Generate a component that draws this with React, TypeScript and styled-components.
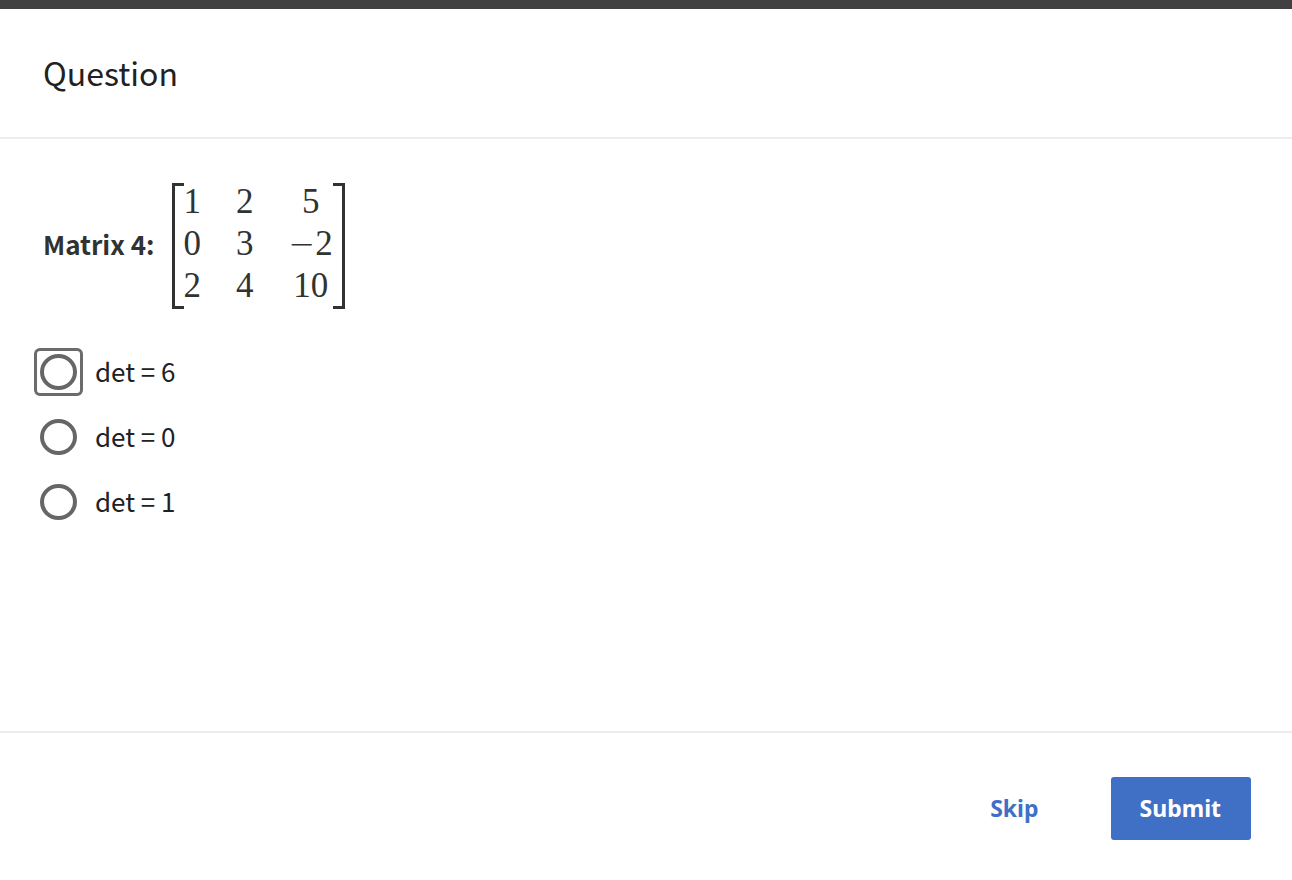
import React, { useState } from "react";
import styled, { createGlobalStyle } from "styled-components";

const GlobalStyle = createGlobalStyle`
  * { box-sizing: border-box; }
  body {
    margin: 0;
    background: #fff;
    color: #212121;
    font-family: "Noto Sans CJK JP", "Noto Sans", sans-serif;
  }
`;

const Page = styled.div`
  display: flex;
  flex-direction: column;
  min-height: 100vh;
  border-top: 9px solid #414141;
`;

const Header = styled.header`
  padding: 39px 43px 41px;
  border-bottom: 2px solid #ededed;
`;

const Title = styled.h1`
  margin: 0;
  font-size: 32px;
  line-height: 48px;
  font-weight: 400;
`;

const Main = styled.main`
  flex: 1;
  padding: 44px 34px;
`;

const Prompt = styled.div`
  display: flex;
  align-items: center;
  gap: 17px;
  padding-left: 9px;
  color: #313333;
`;

const PromptLabel = styled.strong`
  padding-bottom: 5px;
  font-size: 26px;
  line-height: 36px;
  font-weight: 700;
`;

const MatrixFrame = styled.div`
  display: flex;
`;

const Bracket = styled.span<{ $side: "left" | "right" }>`
  width: 12px;
  border: 3px solid #313333;
  border-${(p) => (p.$side === "left" ? "right" : "left")}: 0;
`;

const Matrix = styled.table`
  border-collapse: collapse;
  font-family: "Liberation Serif", serif;
  font-size: 35px;
  line-height: 38px;
  text-align: center;
`;

const Cell = styled.td`
  padding: 0 0 0 35px;
  height: 42px;
  vertical-align: top;

  &:first-child {
    padding-left: 0;
  }
`;

const Minus = styled.span`
  font-family: "DejaVu Sans", sans-serif;
  font-weight: 200;
  font-size: 32px;
  line-height: 1px;
`;

const Options = styled.fieldset`
  display: flex;
  flex-direction: column;
  align-items: flex-start;
  gap: 17px;
  margin: 39px 0 0;
  padding: 0;
  border: 0;
`;

const Option = styled.label`
  display: flex;
  align-items: center;
  gap: 12px;
  font-size: 26px;
  line-height: 36px;
  cursor: pointer;
`;

const OptionText = styled.span`
  padding-bottom: 3px;
`;

const RadioFrame = styled.span<{ $focused: boolean }>`
  display: grid;
  place-items: center;
  width: 49px;
  height: 48px;
  border: 3px solid ${(p) => (p.$focused ? "#6b6b6b" : "transparent")};
  border-radius: 6px;
`;

const Radio = styled.input`
  appearance: none;
  width: 37px;
  height: 36px;
  margin: 0;
  border: 4px solid #666;
  border-radius: 50%;
  outline: none;
  cursor: pointer;

  &:checked {
    background: radial-gradient(#4070c6 0 8px, transparent 9px);
  }
`;

const Footer = styled.footer`
  display: flex;
  justify-content: flex-end;
  align-items: center;
  gap: 42px;
  padding: 44px 41px 40px;
  border-top: 2px solid #ededed;
`;

const Button = styled.button<{ $primary?: boolean }>`
  padding: 15px 30px 16px 29px;
  border: 0;
  border-radius: 3px;
  background: ${(p) => (p.$primary ? "#4070c6" : "transparent")};
  color: ${(p) => (p.$primary ? "#fff" : "#4070c6")};
  font-family: "Noto Sans", "Open Sans", sans-serif;
  font-size: 23px;
  line-height: 32px;
  font-weight: 700;
  cursor: pointer;
`;

const rows = [
  [1, 2, 5],
  [0, 3, -2],
  [2, 4, 10],
];

const answers = ["det = 6", "det = 0", "det = 1"];

export default function App() {
  const [focused, setFocused] = useState(0);

  return (
    <Page>
      <GlobalStyle />
      <Header>
        <Title>Question</Title>
      </Header>
      <Main>
        <Prompt>
          <PromptLabel id="matrix-label">Matrix 4:</PromptLabel>
          <MatrixFrame>
            <Bracket $side="left" />
            <Matrix aria-labelledby="matrix-label">
              <tbody>
                {rows.map((row, r) => (
                  <tr key={r}>
                    {row.map((value, c) => (
                      <Cell key={c}>
                        {value < 0 && <Minus>−</Minus>}
                        {Math.abs(value)}
                      </Cell>
                    ))}
                  </tr>
                ))}
              </tbody>
            </Matrix>
            <Bracket $side="right" />
          </MatrixFrame>
        </Prompt>
        <Options aria-labelledby="matrix-label">
          {answers.map((answer, i) => (
            <Option key={answer} htmlFor={`answer-${i}`}>
              <RadioFrame $focused={focused === i}>
                <Radio
                  type="radio"
                  name="answer"
                  id={`answer-${i}`}
                  value={answer}
                  onFocus={() => setFocused(i)}
                />
              </RadioFrame>
              <OptionText>{answer}</OptionText>
            </Option>
          ))}
        </Options>
      </Main>
      <Footer>
        <Button type="button">Skip</Button>
        <Button type="submit" $primary>
          Submit
        </Button>
      </Footer>
    </Page>
  );
}
